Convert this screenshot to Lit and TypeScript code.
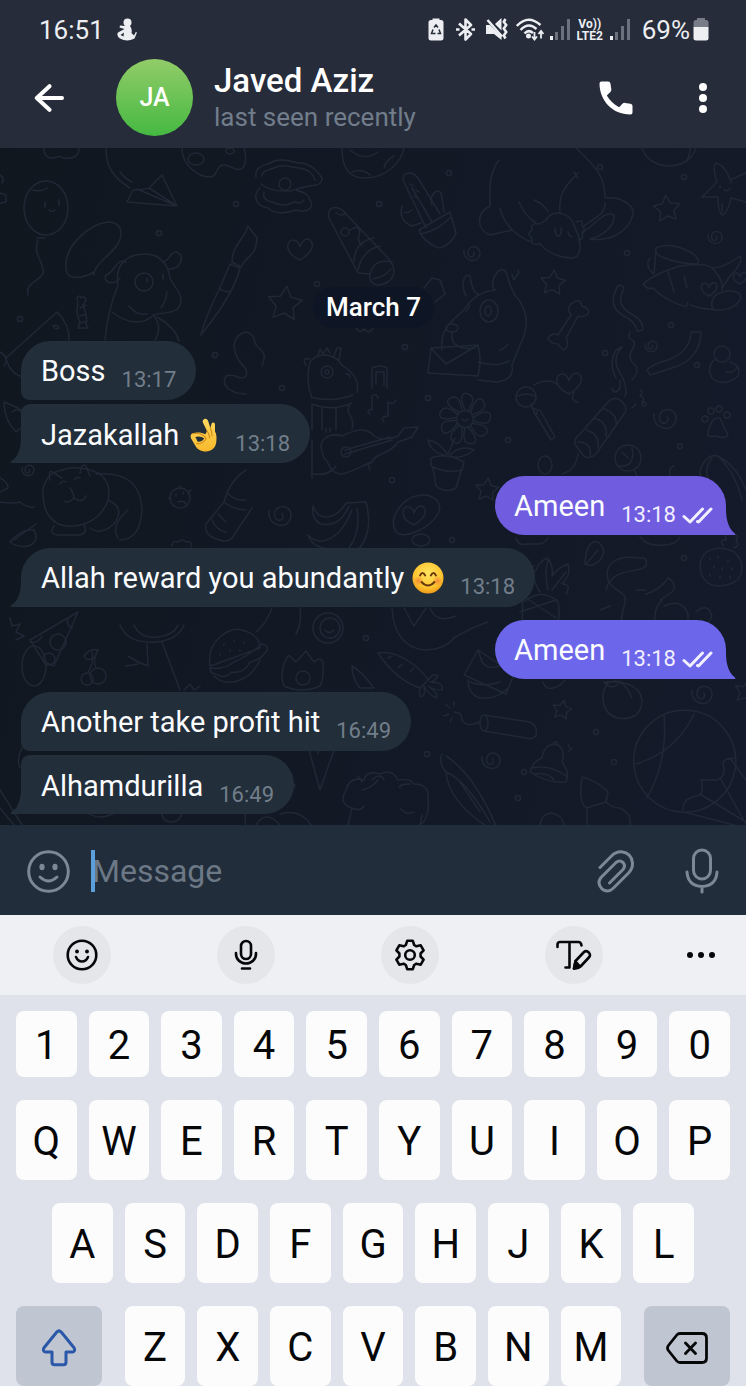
import { LitElement, html, svg, css, nothing } from "lit";
import { customElement, property } from "lit/decorators.js";

/* ---------- wallpaper doodles ---------- */

const n = (v: number) => v.toFixed(1);

const ring = (x: number, y: number, rx: number, ry = rx) =>
  `M${x - rx} ${y}a${rx} ${ry} 0 1 0 ${2 * rx} 0a${rx} ${ry} 0 1 0 ${-2 * rx} 0`;

const star = (x: number, y: number, r: number, turn = 0.2) => {
  const pts: string[] = [];
  for (let i = 0; i < 10; i++) {
    const a = turn - Math.PI / 2 + (i * Math.PI) / 5;
    const q = i % 2 ? r * 0.5 : r;
    pts.push(`${n(x + q * Math.cos(a))} ${n(y + q * Math.sin(a))}`);
  }
  return `M${pts.join("L")}Z`;
};

const spiral = (x: number, y: number, r: number) =>
  `M${x - r} ${y - r * 0.4}C${x - r * 1.2} ${y + r * 1.2} ${x + r} ${y + r * 1.4} ${x + r} ${y}` +
  `C${x + r} ${y - r} ${x - r * 0.6} ${y - r * 1.1} ${x - r * 0.5} ${y + r * 0.1}` +
  `C${x - r * 0.3} ${y + r * 0.8} ${x + r * 0.5} ${y + r * 0.4} ${x + r * 0.2} ${y - r * 0.1}`;

const heart = (x: number, y: number, r: number) =>
  `M${x} ${y + r}C${x - r * 1.6} ${y + r * 0.3} ${x - r * 1.2} ${y - r} ${x - r * 0.5} ${y - r * 0.8}` +
  `Q${x - r * 0.1} ${y - r * 0.7} ${x} ${y - r * 0.2}Q${x + r * 0.3} ${y - r} ${x + r * 0.8} ${y - r * 0.9}` +
  `C${x + r * 1.5} ${y - r * 0.4} ${x + r} ${y + r * 0.4} ${x} ${y + r}Z`;

const flower = (x: number, y: number, r: number) => {
  let d = ring(x, y, r * 0.35);
  for (let i = 0; i < 9; i++) {
    const a = (i * 2 * Math.PI) / 9;
    const at = (q: number, b: number) => `${n(x + q * Math.cos(a + b))} ${n(y + q * Math.sin(a + b))}`;
    d += `M${at(r * 0.4, -0.2)}C${at(r, -0.45)} ${at(r * 1.25, -0.25)} ${at(r, 0.1)}Q${at(r * 0.9, 0.3)} ${at(r * 0.4, 0.2)}`;
  }
  return d;
};

const doodles: string[] = [
  // balloon, blob, paper plane, palette
  "M44 148q0 11 10 10q6-3 9 0q16 2 16-10",
  "M106 148C106 168 114 178 130 188M120 172q5 7 12 10",
  "M127 202L133 190Q142 190 149 188L162 175L177 206ZM149 188L177 206M137 189L177 206",
  "M182 148C182 165 198 177 210 177C218 177 215 166 223 165C230 164 236 173 243 168C247 162 246 155 244 148",
  ring(196, 159, 8, 6), ring(230, 151, 4, 3),
  ring(46, 208, 22, 27),
  "M37 238h8M38 240C32 255 45 262 43 273C40 282 25 282 28 295M45 202v5M59 200v5M49 210q3 3 6 0M33 190q8 2 14-2",
  "M0 175q5 3 2 8M0 193l6 2v7l-6 1",
  "M94 272C80 280 66 280 66 268C64 245 90 224 108 222C122 222 124 234 117 245C110 256 94 264 94 275Z",
  // puppy with a patch
  "M105 340C107 315 112 300 118 285C114 262 130 254 145 254C160 254 168 264 170 278C176 290 184 295 180 305C176 315 160 312 154 315C140 327 125 322 112 312",
  "M126 262C115 258 116 272 106 275C102 284 116 285 120 278M162 262C172 260 168 252 177 252C186 256 180 270 168 269",
  ring(144, 282, 9), "M147 278v4M163 274v5M167 292q-1 10-6 16M129 306q8 10 18 8M153 315C162 325 158 335 155 340M157 317q18 10 22 24",
  "M77 298q3-4 4 0q4-3 5 2l-3 5q5 12 3 20q4 4 0 3h-8l2-6q-5-10-2-18ZM80 308l6-3M80 316l6-2M81 323l6-2",
  "M248 226C244 240 232 245 232 262L241 267C246 255 256 258 257 238Z",
  "M230 264C220 290 205 315 201 335C213 320 235 290 240 268ZM219 288q5 5 12 3",
  "M6 358L57 312Q70 325 69 340M6 358q3 14 14 18M53 326q4-2 6 2q-4 2-6-2",
  "M262 366C270 346 254 352 254 338C248 328 236 332 234 346C236 366 250 366 246 376C240 382 236 372 226 376C220 386 232 394 246 394",
  // clam, ring toy, cactus
  "M256 177C254 166 266 165 270 163C280 157 292 162 298 163C310 162 318 172 322 178C322 188 310 184 302 188",
  "M260 188C252 196 256 206 268 208C276 216 290 212 296 210C310 214 314 206 310 200C308 192 300 192 296 190M261 184Q270 192 290 191L304 187",
  "M262 176C262 170 270 170 274 168C284 163 292 168 300 168Q312 170 315 180M264 192q-2 8 8 10q12 6 22 0q8 2 10-2", ring(285, 184, 6),
  "M342 148C342 172 352 178 365 178C388 178 402 160 404 148M350 150q14 12 28 2M352 172q10-4 18 3M384 168q2-8 10-12",
  "M404 182C400 172 412 170 418 178L440 214M404 182L426 228M412 188L432 222M419 230L450 212L456 233Q452 244 440 248Q430 246 422 236Z",
  "M420 234Q436 232 451 217M432 205C428 192 442 185 442 198L444 212M402 206q-4 14 10 20l9-3M412 210q-5 4-8 2M410 184l3 2M416 190l3 2M414 196l3 2",
  "M329 218C326 206 338 204 346 214L388 258C396 268 396 275 388 282C378 288 368 284 370 274L358 273Z",
  "M354 262q0-20 20-24M358 270q4-20 22-24M370 274q4-16 22-12M373 279q12-2 18-10M336 213q6 4 10 0M350 230q8-6 10 2q-4 8 2 14", ring(345, 232, 4),
  heart(300, 249, 11), star(285, 304, 18, 0.1), spiral(472, 253, 8),
  // big-eyed dog with an envelope
  "M442 350C440 330 450 322 464 310C470 300 480 291 496 290M466 296C460 285 464 272 470 276C472 288 474 293 478 294M494 290C490 278 498 268 504 270C508 272 508 285 515 295C528 310 530 325 520 345L512 365Q515 380 496 382L478 380",
  ring(489, 311, 9, 11), ring(488, 311, 3, 5), ring(452, 328, 6, 4), "M466 312l4-7M452 332C450 345 460 350 475 348",
  "M431 348L478 345Q482 360 478 376L428 373ZM431 348L446 364L478 345M478 362q20 6 32-2M500 350q6-2 8-6",
  "M424 288l8-10l8 2l5 14l-10 8M356 328q4 6 8 1q5 6 9-1",
  // guitar player
  "M306 365q-5-8 4-6M310 362C320 350 336 355 342 365C352 372 360 380 357 392M318 355l2-6l3 5l4-6l3 5M334 356l3-8h4l-2 12M310 362Q305 380 312 398",
  ring(327, 372, 6), ring(327, 372, 2), "M346 374q4 0 4 3M311 397q20 6 42-2M312 404q20 8 40-1M322 408v22M336 408v22M326 428v4M330 428v4M312 405V430M350 405q-4 6 0 10q4 8 2 14",
  "M322 452C318 440 328 432 342 436C350 432 365 425 374 436C380 440 390 440 398 436L404 428L418 427L412 437L398 442C390 455 376 452 372 462C360 466 350 474 340 474C328 472 330 462 324 458Z",
  "M345 454L392 440M345 450L390 437M312 440V478M313 474Q330 476 336 466M368 464l2 6", ring(346, 452, 5),
  "M372 388v-20q8-4 15 0v20M376 384v-12h8v14M370 414q-5-5 2-4v-14q4-4 6 2M384 422q-5-5 4-6v-14q5 4 8-2",
  flower(465, 419, 24), "M462 419q3 4 6 0M455 438L448 454M447 456Q430 452 428 440Q440 442 447 454M449 456Q460 444 474 450Q462 460 449 456M431 458Q446 452 464 462L462 470Q446 474 431 466ZM433 468L436 486Q446 494 456 488L461 471",
  spiral(280, 515, 11),
  "M313 506C318 522 336 520 346 503L366 502C372 525 368 545 350 556M308 535C320 548 340 540 352 510M313 506q-2 14 8 18q18 4 28-18M308 535q4 12 20 14M357 508q4 24-8 40",
  "M396 532C388 520 400 500 416 496C432 492 444 502 438 514C430 528 404 540 396 532Z", heart(414, 515, 10), ring(421, 540, 9, 6), star(487, 490, 12, 0.1),
  // sleeping unicorn
  "M576 148C600 170 605 180 605 198C620 196 635 205 633 215C628 232 610 242 590 239C605 235 615 225 614 215C606 208 590 230 582 232",
  "M560 212C558 190 570 182 578 173M574 172l4 6M605 203C606 215 590 220 584 226M546 220C552 208 572 212 575 228C582 240 582 258 572 258C560 258 545 252 540 243",
  "M540 244q-10 2-8-6q-6-4 0-8q-2-8 8-6l6-4M519 202q6 14 16 20M534 200q10 4 14 12M500 208C505 230 525 240 532 242M555 228q0 8 4 8q3-2 2-8M568 232q2 6 4 4M576 222q8-4 6 4q5 4 0 8q2 6-4 6",
  "M499 160C488 175 490 190 490 206C476 212 476 230 490 235L512 230",
  "M642 148C650 172 688 172 696 148M686 162q4-6 4-14",
  "M702 197L717 182Q712 166 716 163Q726 166 730 180L746 173M702 197L718 197Q718 214 723 215Q728 212 731 198L746 202M720 186v2M731 181v2M724 190q4 2 6-2M722 204v8",
  star(667, 209, 14, -0.1), star(553, 283, 13, 0.1), spiral(715, 237, 7), spiral(651, 346, 6),
  "M656 248Q668 242 686 250Q700 256 698 264Q680 264 664 258Q654 254 656 248ZM656 250L654 274M650 258q-6 8 4 16M643 284Q654 274 680 266Q706 262 712 268Q724 280 722 290M643 284q4 6 10 4Q664 300 686 307L688 302M668 272L674 292M684 276L687 288M712 268Q724 268 740 256Q744 262 730 276L722 288M713 310C710 302 712 292 728 291C740 290 742 296 740 300C732 312 718 310 713 310ZM690 305q14 5 24 4",
  heart(709, 289, 7), heart(740, 278, 6),
  "M574 302q6-4 8 4q8 2 6 8q-6 4-10 2L566 338q4 8-2 12q-4-2-6-6q-8 0-10-6q4-6 10-3L571 315q-6-8 3-13Z",
  "M618 286q4-2 6 2Q616 304 628 312Q644 320 643 330L637 331Q636 322 624 316Q606 306 618 286Z",
  "M691 332l10 0Q700 360 672 368L650 375L647 370Q652 364 668 360Q690 352 691 332ZM630 332q-3 6 2 8t0 10t2 14t-2 16M616 350l6-3Q610 360 622 376Q628 390 625 396M616 350Q608 364 616 378",
  ring(722, 354, 8), "M714 360Q706 368 712 378Q724 388 738 376Q742 366 730 362M726 372q8 2 12-6", heart(569, 383, 11),
  "M534 385q14-8 24 0M512 274q2 10 4 2q4-2 2-6",
  // lollipop, popsicle, paw
  ring(526, 397, 10), "M518 396q8-4 16 0M532 408l6 2l-2 6M534 412L551 440L555 437L540 410M531 404l4 10M574 392q-4 10 4 10",
  "M576 446Q572 440 580 434L608 402Q616 394 624 404Q628 410 624 414L596 454Q588 460 584 456ZM578 442q14 0 12 14M586 430q14 4 12 18M594 418q14 4 12 18M602 408q16 6 14 16M578 454Q576 470 562 474",
  "M612 388q2 8 8 0v-8M640 390q4 2 0 6q6 2 2 6M632 408l4-4", ring(644, 404, 2), spiral(665, 418, 11),
  "M708 432Q712 416 720 418Q724 428 728 434Q726 440 716 436Q706 438 708 432Z", ring(705, 419, 3), ring(711, 411, 3), ring(719, 409, 3), ring(727, 415, 3),
  ring(545, 465, 7, 9), ring(628, 458, 13), "M618 466q18 2 14-18M622 452l6 6M634 470l4 8M700 480C698 462 710 454 718 456C736 466 742 480 746 490M712 458q-8 10-4 20M718 456q18 18 24 44M670 476q-2-8 4-10",
  "M585 564Q586 540 598 542Q608 550 600 560Q592 568 585 564ZM586 564L598 550",
  // pineapple, snake, strawberry
  "M522 600Q524 620 520 625M557 600Q562 612 556 628M524 602Q540 588 556 600M540 592Q530 576 536 570Q540 560 548 558Q554 568 552 576Q560 566 568 564Q572 574 562 584Q572 584 566 594M548 590Q544 572 548 560M552 590L566 572M530 576q-4-8 4-10M520 612L556 600M526 598L556 618",
  "M606 590C612 566 640 574 646 566Q648 556 640 558C614 554 604 566 608 580C614 594 630 590 624 606L620 625M646 594Q660 590 668 578Q678 584 672 592L660 600M636 590h10M662 600Q652 610 656 628M664 606q18-8 24 8v16M696 612q12-10 16 4l-6 12",
  "M700 564C702 548 720 545 734 552C746 562 744 580 730 584C712 590 700 582 700 564ZM724 546q-6-6 2-6q-2-10 6-6q8 0 4 8q6 2-2 6M710 558v2M718 556v2M728 560v2M714 566v2M722 568v2M732 568v2M710 574v2M720 576v2M730 576v2",
  "M516 538q2 8 10 6h14q6-2 8-6M640 537q8 10 24 8q12 0 16-8",
  // sleepy cat, ball, sock, leaf
  "M4 402L18 408L28 422L16 432Q4 420 4 402ZM12 412q6-4 10-2",
  spiral(28, 470, 6), "M43 495C42 480 52 472 62 470Q80 464 100 474Q112 484 108 500C100 524 74 530 58 524C46 516 44 508 43 495Z",
  "M50 480Q48 470 52 472L62 478M80 473Q82 462 86 466L90 476M70 488q4 6 4 10q-6 6-10 3M74 498q8 6 12-2M60 484q2-4 6-2M74 480q4-4 6-2M96 474Q140 470 142 510Q140 540 120 540M108 500Q126 508 114 524Q100 536 90 528M118 538Q110 526 128 510M54 526q-6 8 4 9h22q8-2 4-10",
  ring(180, 498, 10), "M168 498l3 1M180 486v3M191 490l-3 3M176 494v2M183 492v2M178 502q6-2 8 2",
  "M246 470Q230 480 224 502L206 524Q204 534 214 538Q226 544 232 538L252 508M226 492q10 10 20 8M224 502q10 8 22 8M218 514l8 8M212 520q4 10 14 12",
  "M10 542Q22 528 34 530Q40 542 28 546Q18 548 10 542ZM14 540L36 524M0 502q14 2 20 0q8 6 14 5M0 478q8 4 8 10l-8 4M172 546q0-6 6-4q4-4 8 0q6-2 5 5",
  // cheese, cherries, burger, tulip
  "M10 618l2 8l8-2l-4 8l8 4l-8 4M30 640L78 612L54 666L44 662Z", ring(58, 642, 8), ring(49, 659, 6), ring(34, 666, 12, 20), "M42 636q-4 8-12 6M72 628q-6-2-4-10",
  ring(87, 679, 6), ring(98, 676, 8), "M88 672Q94 664 92 652M96 668Q92 660 98 650Q90 648 84 656Q86 662 94 658",
  "M120 625Q128 644 156 642Q178 640 184 625M134 625q6 14 24 12q16-2 20-12M147 644L148 666L138 662M138 662l-10-6M138 664l-12 2M162 642L180 690M184 690l6-6l4 6l6-4",
  "M210 666C206 640 230 626 242 630C256 634 260 640 260 648L216 664ZM210 668Q224 670 234 662Q248 656 262 644Q270 646 266 652Q260 660 250 662Q244 674 232 672Q224 680 216 674Q210 674 210 668M214 676Q224 686 240 680Q254 674 260 660M224 644v1M234 640v1M244 642v1M230 650v1M240 650v1M220 654v1",
  ring(328, 628, 15), ring(330, 628, 10), "M325 630q4 5 9 0M284 664Q288 654 290 656L296 662L306 651L314 662Q320 656 323 662Q324 680 320 686Q302 694 284 686Q280 676 284 664Z", ring(303, 678, 7),
  "M272 608q-6 16-16 24M300 608q2 16-4 26M392 608Q394 646 424 650Q444 650 454 638Q470 628 488 622M404 608l10 18l12-18M430 608q6 16 26 8",
  // carrot, mail, firecracker, peach, bell
  "M378 653Q392 650 410 662Q424 672 428 680L420 688Q396 680 378 653ZM388 658l4-2M398 668l4-4M410 672l4-4M428 680Q434 672 438 676Q434 682 430 682Q444 682 442 690Q434 690 428 686Q440 694 436 698Q428 694 424 686Q426 698 420 696Q418 690 422 686",
  "M464 675L478 650L514 674L506 694L464 675M478 650L482 662Q490 672 502 664M468 680Q468 694 480 698Q496 700 508 688M470 682Q484 688 500 682",
  "M543 682q2 8 10 6q8-2 12-8",
  "M604 682C620 680 640 684 642 700C642 716 630 720 618 718C600 714 600 690 608 684M606 684Q622 674 632 698M604 682q10 10 16-1",
  ring(484, 723, 4, 8), "M484 715L530 722Q538 726 536 736Q532 740 526 738L484 731M480 722Q466 728 462 720Q462 712 454 712M450 708l-4-3M449 714l-5 2M452 718l-2 4M454 706v-4",
  star(562, 710, 10), spiral(702, 694, 10), spiral(491, 760, 9), star(746, 692, 12),
  "M530 772Q532 762 542 758Q544 744 556 744Q566 748 562 762Q570 772 566 782Q548 784 530 772ZM532 768q18-4 34 8M534 774q14-2 20 6M553 744q2-4 5-1M568 752l4-4M570 748l-2-4",
  "M634 766A51 51 0 1 1 735 770A51 51 0 0 1 634 766M664 716Q668 760 647 798M694 714Q676 752 636 764",
  "M735 758q-12 0-12 6q4 12-6 16h-16q4 14-4 16q-14 2-14 14M720 778L746 824M700 794L746 822M684 812L738 826M730 758l16 22",
  "M442 754Q438 762 446 772Q448 800 486 826M446 756Q474 774 496 826M446 772Q466 780 490 822M460 782l20 30",
  "M582 777Q596 780 608 792L606 802L586 808Q578 802 582 777ZM587 808V826M606 802Q612 808 620 808Q632 814 630 825M540 825q2-12 12-12q10 2 12 12",
  "M346 790Q350 776 364 780Q366 770 380 774Q392 768 398 780Q410 778 414 784Q430 784 428 800Q430 818 420 825M378 780q-6 8-16 10M410 784q-12 0-10 4M400 808q6 8 14 4M420 825l2-10M346 790Q338 804 352 808Q360 812 364 806M352 808L348 825M358 776l4 6M372 780q8-8 12 0",
  "M309 750L320 790L334 750M318 748v6M384 718Q396 716 394 704Q392 696 384 698",
  "M22 748Q16 758 20 768M0 790L22 825M0 808L14 825M86 812q14 10 30 0M162 812q0 10 10 10q8 0 10-10M246 812q-2 6 0 14M256 825q10-16 24 0M280 814q20-6 32 12", ring(293, 786, 2),
  "M352 666q10 6 22 22h-14q-8-10-8-22M600 610l10-4M0 352q10 6 4 14",
];

const specks: [number, number][] = [
  [159, 233], [236, 204], [20, 319], [215, 355], [379, 204], [449, 173], [317, 284], [405, 347], [600, 167],
  [684, 177], [627, 253], [671, 325], [605, 353], [697, 365], [392, 480], [452, 540], [428, 398], [282, 388],
  [508, 440], [680, 446], [684, 558], [427, 754], [596, 732], [614, 762], [518, 798], [366, 638], [524, 772],
];

const wallpaper = html`
  <svg class="wallpaper" viewBox="0 148 746 677" preserveAspectRatio="xMidYMid slice" aria-hidden="true">
    ${doodles.map((d) => svg`<path d=${d}></path>`)}
    ${specks.map(([x, y]) => svg`<circle cx=${x} cy=${y} r="2.6"></circle>`)}
  </svg>
`;

/* ---------- emoji ---------- */

const okHand = html`
  <svg class="emoji" viewBox="0 0 32 34" role="img" aria-label="OK hand">
    <defs>
      <linearGradient id="skin" gradientUnits="userSpaceOnUse" x1="12" y1="0" x2="18" y2="34">
        <stop offset="0" stop-color="#ffdc62"></stop><stop offset="1" stop-color="#f9b82b"></stop>
      </linearGradient>
    </defs>
    <path fill="url(#skin)" d="M17 1.200C19 .200 20.600 1.400 21.200 3.200L23.400 10L24.600 5.600C25.400 3.600 28 4.200 28 6.400L28 13.500C29.800 16 29.800 20.500 29.200 24.500C28.400 29.800 24.500 33.500 19 33.500C13.500 33.500 10 31 8.200 27.500L4.400 21C2.900 18.600 3.600 15.600 6.400 15.100C10 14.200 14 14 18.400 16.200L20 13L16 4.800C15.300 3.200 15.700 1.900 17 1.200Z"></path>
    <path fill="#222e3a" d="M8.400 19C11.500 17.800 15 18.600 17.200 20.400C15.400 23 12.600 24.200 10.600 23.400Z"></path>
    <path fill="none" stroke="#cf8a1a" stroke-width="1.100" stroke-linecap="round" d="M5.600 15.800C11 14.400 17 16.200 19.200 20.600C17 24.600 13 26.200 9.800 25.400M20 13Q22.500 16 22.600 20M23.400 10Q25 14 25 18"></path>
  </svg>
`;

const smilingFace = html`
  <svg class="emoji" viewBox="0 0 32 34" role="img" aria-label="Smiling face with smiling eyes">
    <defs>
      <radialGradient id="face" cx="0.5" cy="0.35" r="0.65">
        <stop offset="0" stop-color="#ffe45e"></stop><stop offset="0.7" stop-color="#fdc530"></stop><stop offset="1" stop-color="#ee9a17"></stop>
      </radialGradient>
      <radialGradient id="blush">
        <stop offset="0" stop-color="#f2703a" stop-opacity="0.700"></stop><stop offset="1" stop-color="#f2703a" stop-opacity="0"></stop>
      </radialGradient>
    </defs>
    <circle cx="16" cy="17" r="15.500" fill="url(#face)"></circle>
    <circle cx="6.500" cy="20" r="5" fill="url(#blush)"></circle>
    <circle cx="25.500" cy="20" r="5" fill="url(#blush)"></circle>
    <path fill="none" stroke="#6b3a0c" stroke-width="1.900" stroke-linecap="round" d="M8 14.500Q10.500 9.500 13.200 14.500M18.800 14.500Q21.500 9.500 24 14.500M9.500 21Q16 28 22.500 21"></path>
  </svg>
`;

/* ---------- message bubble ---------- */

interface Message {
  text: string;
  time: string;
  own?: boolean;
  emoji?: unknown;
  place: "single" | "first" | "last";
  tone?: string;
}

@customElement("chat-bubble")
class ChatBubble extends LitElement {
  @property({ attribute: false }) message!: Message;

  static styles = css`
    :host { display: flex; }
    .bubble {
      position: relative;
      display: flex;
      align-items: center;
      gap: 16px;
      height: 59px;
      padding: 0 20px;
      box-sizing: border-box;
      border-radius: 30px;
      background: #222e3a;
      color: #fbfcfe;
      font-size: 29px;
      line-height: 34px;
      white-space: nowrap;
    }
    .bubble.first { border-bottom-left-radius: 9px; }
    .bubble.last { padding-top: 2px; border-radius: 9px 30px 30px 0; }
    .bubble.single { border-bottom-left-radius: 0; }
    .bubble.own {
      margin-left: auto;
      padding: 0 13px 0 19px;
      border-radius: 30px 30px 0 30px;
      background: #6f5cdf;
    }
    .bubble.own.indigo { background: #6b66ea; }
    .text { display: flex; align-items: center; gap: 8px; }
    .emoji { width: 32px; height: 34px; }
    .meta {
      display: flex;
      align-items: center;
      gap: 6px;
      padding-top: 18px;
      color: #727e8a;
      font-size: 22px;
      line-height: 26px;
    }
    .own .meta { color: #f2efff; }
    .ticks { width: 31px; height: 18px; }
    .tail {
      position: absolute;
      bottom: 0;
      right: 100%;
      width: 12px;
      height: 26px;
      margin-right: -1px;
      fill: #222e3a;
    }
    .own .tail {
      right: auto;
      left: 100%;
      margin: 0 0 0 -1px;
      fill: #6f5cdf;
    }
    .own.indigo .tail { fill: #6b66ea; }
  `;

  render() {
    const m = this.message;
    const tail = m.own
      ? svg`<path d="M0 0H1C1 12 4 20 10 24.500Q11 26 9 26H0Z"></path>`
      : svg`<path d="M12 0H11C11 12 8 20 1 24.500Q0 26 2 26H12Z"></path>`;
    return html`
      <div class="bubble ${m.place} ${m.own ? "own" : ""} ${m.tone ?? ""}">
        <span class="text"><span>${m.text}</span>${m.emoji ?? nothing}</span>
        <span class="meta">
          <time>${m.time}</time>
          ${m.own
            ? html`<svg class="ticks" viewBox="0 0 31 18" role="img" aria-label="Read">
                <path fill="none" stroke="#f2efff" stroke-width="3" stroke-linecap="round" stroke-linejoin="round"
                  d="M2 10.500L8 16L20.500 3M15.500 15.500L16.500 16L29 3"></path>
              </svg>`
            : nothing}
        </span>
        ${m.place === "first" ? nothing : html`<svg class="tail" viewBox="0 0 12 26" aria-hidden="true">${tail}</svg>`}
      </div>
    `;
  }
}

/* ---------- on-screen keyboard ---------- */

@customElement("soft-keyboard")
class SoftKeyboard extends LitElement {
  static styles = css`
    :host { display: block; background: #dfe2ea; }
    button {
      margin: 0;
      padding: 0;
      border: 0;
      background: none;
      color: #060708;
      font: inherit;
    }
    svg {
      display: block;
      fill: none;
      stroke: currentColor;
      stroke-linecap: round;
      stroke-linejoin: round;
    }
    .tools {
      display: grid;
      grid-template-columns: repeat(4, 22%) 1fr;
      place-items: center;
      height: 80px;
      background: #eff0f4;
    }
    .tool {
      display: grid;
      place-items: center;
      width: 58px;
      height: 58px;
      border-radius: 50%;
      background: #e4e6e9;
    }
    .tool.plain { background: none; }
    .keys { display: grid; gap: 23px; padding: 16px 16px 0; }
    .row { display: flex; gap: 12px; }
    .row.inset { padding: 0 36px; }
    .key {
      flex: 1 1 0;
      height: 80px;
      padding-top: 4px;
      border-radius: 8px;
      background: #fcfcfd;
      font-size: 40px;
      line-height: 48px;
    }
    .digits .key { height: 66px; }
    .key.side {
      display: grid;
      place-items: center;
      flex: 0 0 12%;
      background: #bfc5d1;
    }
    .key.shift { margin-right: 11px; color: #2a57a8; }
    .key.erase { margin-left: 11px; }
  `;

  private row(letters: string) {
    return [...letters].map((k) => html`<button class="key" type="button">${k}</button>`);
  }

  render() {
    return html`
      <div class="tools">
        <button class="tool" type="button" aria-label="Emoji">
          <svg width="32" height="32" viewBox="0 0 32 32" stroke-width="2.600">
            <circle cx="16" cy="16" r="14.300"></circle>
            <path d="M10 18Q12 22.500 16 22.500T22 18"></path>
            <g fill="currentColor" stroke="none"><circle cx="11" cy="12.500" r="1.900"></circle><circle cx="21" cy="12.500" r="1.900"></circle></g>
          </svg>
        </button>
        <button class="tool" type="button" aria-label="Voice input">
          <svg width="32" height="32" viewBox="0 0 32 32" stroke-width="2.600">
            <rect x="11" y="2" width="10" height="18" rx="5"></rect>
            <path d="M6 14V15A10 9.500 0 0 0 26 15V14M12 29.500H20"></path>
          </svg>
        </button>
        <button class="tool" type="button" aria-label="Settings">
          <svg width="32" height="32" viewBox="0 0 32 32" stroke-width="2.600">
            <path d="M13.200 1.800H18.800L20.200 6L22.400 7.300L26.700 6.300L29.600 11.300L26.600 14.500V17.500L29.600 20.700L26.700 25.700L22.400 24.700L20.200 26L18.800 30.200H13.200L11.800 26L9.600 24.700L5.300 25.700L2.400 20.700L5.400 17.500V14.500L2.400 11.300L5.300 6.300L9.600 7.300L11.800 6Z"></path>
            <circle cx="16" cy="16" r="4.800"></circle>
          </svg>
        </button>
        <button class="tool" type="button" aria-label="Text editing">
          <svg width="36" height="32" viewBox="0 0 36 32" stroke-width="2.600">
            <path d="M1.500 8V5.500Q1.500 3 4 3H22.500Q25 3 25.500 6.500M13.500 3V28.500M9.500 28.500H13.500M18 29.500L19.500 22L28 13Q30 11.200 32.500 13.200Q35 15.800 33.300 18L25 27Q23 29 18 29.500Z"></path>
            <path fill="currentColor" d="M19.500 22.500L24 27.500L18 29.500Z"></path>
          </svg>
        </button>
        <button class="tool plain" type="button" aria-label="More">
          <svg width="28" height="6" viewBox="0 0 28 6"><g fill="currentColor" stroke="none">
            <circle cx="3" cy="3" r="3"></circle><circle cx="14" cy="3" r="3"></circle><circle cx="25" cy="3" r="3"></circle>
          </g></svg>
        </button>
      </div>
      <div class="keys">
        <div class="row digits">${this.row("1234567890")}</div>
        <div class="row">${this.row("QWERTYUIOP")}</div>
        <div class="row inset">${this.row("ASDFGHJKL")}</div>
        <div class="row">
          <button class="key side shift" type="button" aria-label="Shift">
            <svg width="36" height="38" viewBox="0 0 36 38" stroke-width="3">
              <path d="M15.800 3Q18 .800 20.200 3L33.200 19Q34.500 22.500 31.500 23H25V33Q25 35.800 22.500 35.800H13.500Q11 35.800 11 33V23H4.500Q1.500 22.500 2.800 19Z"></path>
            </svg>
          </button>
          ${this.row("ZXCVBNM")}
          <button class="key side erase" type="button" aria-label="Backspace">
            <svg width="42" height="32" viewBox="0 0 42 32" stroke-width="2.800">
              <path d="M14 1.500H36Q40.500 1.500 40.500 6V26Q40.500 30.500 36 30.500H14Q12 30.500 10.800 29L2.400 18.500Q.600 16 2.400 13.500L10.800 3Q12 1.500 14 1.500ZM19.500 11L29.500 21.500M29.500 11L19.500 21.500"></path>
            </svg>
          </button>
        </div>
      </div>
    `;
  }
}

/* ---------- page ---------- */

const signalBars = html`
  <svg width="20" height="22" viewBox="0 0 20 22" aria-hidden="true">
    <rect x="0" y="17" width="3" height="4" fill="#eceef2"></rect>
    <g fill="#6b717d"><rect x="5" y="13" width="3" height="8"></rect><rect x="11" y="7" width="3" height="14"></rect><rect x="17" y="0" width="3" height="21"></rect></g>
  </svg>
`;

const messages: Message[] = [
  { text: "Boss", time: "13:17", place: "first" },
  { text: "Jazakallah", time: "13:18", place: "last", emoji: okHand },
  { text: "Ameen", time: "13:18", place: "single", own: true },
  { text: "Allah reward you abundantly", time: "13:18", place: "single", emoji: smilingFace },
  { text: "Ameen", time: "13:18", place: "single", own: true, tone: "indigo" },
  { text: "Another take profit hit", time: "16:49", place: "first" },
  { text: "Alhamdurilla", time: "16:49", place: "last" },
];

@customElement("app-root")
class AppRoot extends LitElement {
  static styles = css`
    :host {
      display: block;
      overflow: hidden;
      font-family: Roboto, "Noto Sans", sans-serif;
    }
    .status {
      display: flex;
      align-items: center;
      justify-content: space-between;
      height: 47px;
      padding: 12px 37px 0 39px;
      box-sizing: border-box;
      background: #262c3a;
      color: #eceef2;
      font-size: 26px;
      line-height: 36px;
    }
    .status svg { display: block; }
    .group { display: flex; align-items: center; gap: 6px; }
    .clock { gap: 13px; }
    .battery { gap: 3px; padding-left: 6px; }
    .volte {
      display: grid;
      width: 28px;
      font-size: 12px;
      font-weight: 700;
      line-height: 12px;
      text-align: center;
    }
    .header {
      display: flex;
      align-items: center;
      height: 101px;
      padding: 0 29px 0 34px;
      box-sizing: border-box;
      background: #262c3a;
      color: #ffffff;
    }
    button {
      display: grid;
      place-items: center;
      margin: 0;
      padding: 0;
      border: 0;
      background: none;
      color: inherit;
    }
    .avatar {
      display: grid;
      place-items: center;
      width: 77px;
      height: 77px;
      margin: 0 21px 0 52px;
      border-radius: 50%;
      background: linear-gradient(#92cc68, #45b942);
      font-size: 25px;
      font-weight: 500;
    }
    .who { flex: 1; }
    .name {
      margin: 0;
      font-size: 33px;
      font-weight: 500;
      line-height: 38px;
    }
    .seen {
      margin: 0;
      color: #717d8b;
      font-size: 26px;
      line-height: 34px;
    }
    .menu { width: 28px; margin-left: 56px; }
    .chat {
      position: relative;
      overflow: hidden;
      padding: 139px 20px 11px 21px;
      background: linear-gradient(100deg, #10171f, #121925 45%, #141a29);
    }
    .wallpaper {
      position: absolute;
      inset: 0;
      width: 100%;
      height: 100%;
      fill: none;
      stroke: #202836;
      stroke-width: 1.500;
      stroke-linejoin: round;
      stroke-linecap: round;
    }
    .day {
      position: relative;
      width: fit-content;
      margin: 0 auto 13px;
      padding: 0 13px;
      border-radius: 21px;
      background: #0e1625;
      color: #ffffff;
      font-size: 26px;
      font-weight: 500;
      line-height: 41px;
    }
    .thread {
      position: relative;
      display: grid;
      gap: 13px;
      margin: 0;
      padding: 0;
      list-style: none;
    }
    .joined { margin-top: -9px; }
    .compose {
      display: flex;
      align-items: center;
      height: 90px;
      padding: 2px 27px 0 27px;
      box-sizing: border-box;
      background: #212d3a;
      color: #7c8894;
    }
    .compose svg {
      fill: none;
      stroke: currentColor;
      stroke-width: 3;
      stroke-linecap: round;
    }
    .field { position: relative; display: flex; flex: 1; margin-left: 22px; }
    .field input {
      width: 100%;
      margin: 0;
      padding: 0;
      border: 0;
      outline: 0;
      background: none;
      color: #ffffff;
      font: 32px/42px Roboto, "Noto Sans", sans-serif;
    }
    .field input::placeholder { color: #6c7885; opacity: 1; }
    .caret {
      position: absolute;
      left: -1px;
      top: 0;
      width: 4px;
      height: 42px;
      background: #5d9fdb;
    }
    .clip { margin-right: 50px; }
  `;

  render() {
    return html`
      <div class="status">
        <div class="group clock">
          <span>16:51</span>
          <svg width="20" height="23" viewBox="0 0 20 23" fill="#eceef2" aria-hidden="true">
            <circle cx="10.500" cy="4.500" r="4"></circle>
            <path d="M8 8L13 8Q15.500 11 14.500 15L17 17.500L18.800 14L20 14.600L17.500 20.500Q10 24.500 3 20.500Q-1 17.500 1 14.500L7.500 11L2.500 9.600L3 7.600Z"></path>
            <path d="M7 14.500L3.500 17L6.500 18.500Z" fill="#262c3a"></path>
          </svg>
        </div>
        <div class="group">
          <svg width="22" height="23" viewBox="0 0 22 23" aria-hidden="true">
            <path fill="#eceef2" d="M4.500 2V.500H11.500V2H13Q15.500 2 15.500 4.500V20.500Q15.500 22.500 13 22.500H3Q.500 22.500 .500 20.500V4.500Q.500 2 3 2Z"></path>
            <path fill="none" stroke="#262c3a" stroke-width="1.500" d="M6 9.500L8 7L10 9.500M11 11.500L12.500 15.500H9.500M7.500 15.500H3.500L5 11.500"></path>
          </svg>
          <svg width="24" height="23" viewBox="0 0 24 23" fill="none" stroke="#eceef2" stroke-width="2.600" stroke-linejoin="round" aria-hidden="true">
            <path d="M3 5.500L15 16L9.500 21.500V1.500L15 7L3 17.500M0 11.500H3.500M15.500 11.500H19"></path>
          </svg>
          <svg width="24" height="23" viewBox="0 0 24 23" aria-hidden="true">
            <path fill="#eceef2" d="M0 7H4L15.500 18.500V22L8 16H0ZM9 6L15.500 0V12.500Z"></path>
            <path fill="none" stroke="#eceef2" stroke-width="2.600" d="M1.500 2L16 18.500M19.500 1L17.800 4L20.200 7L17.800 10.500L20.200 14L17.800 17.500L19.500 20.500"></path>
          </svg>
          <svg width="28" height="24" viewBox="0 0 28 24" fill="none" stroke="#eceef2" stroke-width="2.400" aria-hidden="true">
            <path d="M.800 8Q12 -4 24.500 7M4.500 12Q12.500 3.500 20.500 11M8.500 15.500Q12.500 11 17 15"></path>
            <circle cx="12.500" cy="18" r="1.300" fill="#eceef2"></circle>
            <path stroke-width="1.800" d="M18.500 14V21M16 18.500L18.500 21.500L21 18.500M25 20.500V13.500M22.500 16L25 13L27.500 16"></path>
          </svg>
          ${signalBars}
          <span class="volte"><span>Vo))</span><span>LTE2</span></span>
          ${signalBars}
          <span class="group battery">
            <span>69%</span>
            <svg width="16" height="23" viewBox="0 0 16 23" aria-hidden="true">
              <path fill="#777c87" d="M4 2V0H12V2H13Q15.500 2 15.500 4.500V9H.500V4.500Q.500 2 3 2Z"></path>
              <path fill="#eceef2" d="M.500 9H15.500V20.500Q15.500 22.500 13 22.500H3Q.500 22.500 .500 20.500Z"></path>
            </svg>
          </span>
        </div>
      </div>

      <header class="header">
        <button type="button" aria-label="Back">
          <svg width="30" height="28" viewBox="0 0 30 28" fill="none" stroke="#ffffff" stroke-width="4" stroke-linecap="round" stroke-linejoin="round">
            <path d="M28 14H3M15.500 2.200L2.800 14L15.500 25.800"></path>
          </svg>
        </button>
        <div class="avatar">JA</div>
        <div class="who">
          <h1 class="name">Javed Aziz</h1>
          <p class="seen">last seen recently</p>
        </div>
        <button type="button" aria-label="Call">
          <svg width="34" height="34" viewBox="0 0 34 34" fill="#ffffff">
            <path d="M2.500 .500H9Q11.200 .500 11.500 2.700L12.300 8.300Q12.500 9.800 11.400 11L7.800 14.400Q12.300 22 20.200 26.200L23.400 22.800Q24.500 21.700 26 21.900L31.500 22.700Q33.500 23 33.500 25V31.500Q33.500 33.500 31.500 33.500C13 33.500 .500 19 .500 2.500Q.500 .500 2.500 .500Z"></path>
          </svg>
        </button>
        <button class="menu" type="button" aria-label="More options">
          <svg width="8" height="30" viewBox="0 0 8 30" fill="#ffffff">
            <circle cx="4" cy="4" r="4"></circle><circle cx="4" cy="15" r="4"></circle><circle cx="4" cy="26" r="4"></circle>
          </svg>
        </button>
      </header>

      <main class="chat">
        ${wallpaper}
        <div class="day">March 7</div>
        <ol class="thread">
          ${messages.map((m) => html`
            <li class=${m.place === "last" ? "joined" : ""}><chat-bubble .message=${m}></chat-bubble></li>
          `)}
        </ol>
      </main>

      <div class="compose">
        <button type="button" aria-label="Stickers">
          <svg width="43" height="43" viewBox="0 0 43 43">
            <circle cx="21.500" cy="21.500" r="19.800"></circle>
            <path d="M13 27Q21.500 35 30 27"></path>
            <g fill="currentColor" stroke="none"><ellipse cx="15" cy="17" rx="2.600" ry="3.200"></ellipse><ellipse cx="28" cy="17" rx="2.600" ry="3.200"></ellipse></g>
          </svg>
        </button>
        <div class="field">
          <input type="text" aria-label="Message" placeholder="Message" />
          <span class="caret"></span>
        </div>
        <button class="clip" type="button" aria-label="Attach">
          <svg width="38" height="43" viewBox="0 0 38 43">
            <path d="M3 17.500L14.500 6Q19 1.500 24.500 1.800Q34.500 3 35.500 13Q35.800 18.500 31.500 23L16.500 38Q11 43.500 5 39Q-.500 33.500 4 27.500L19 12.500Q22.500 9.500 26 12.500Q29 16 26 19.500L12.500 33"></path>
          </svg>
        </button>
        <button type="button" aria-label="Record voice message">
          <svg width="34" height="46" viewBox="0 0 34 46">
            <rect x="8.500" y="2" width="17" height="29" rx="8.500"></rect>
            <path d="M2 24Q3 38 17 38.500Q31 38 32 24M17 38.500V44"></path>
          </svg>
        </button>
      </div>

      <soft-keyboard></soft-keyboard>
    `;
  }
}
